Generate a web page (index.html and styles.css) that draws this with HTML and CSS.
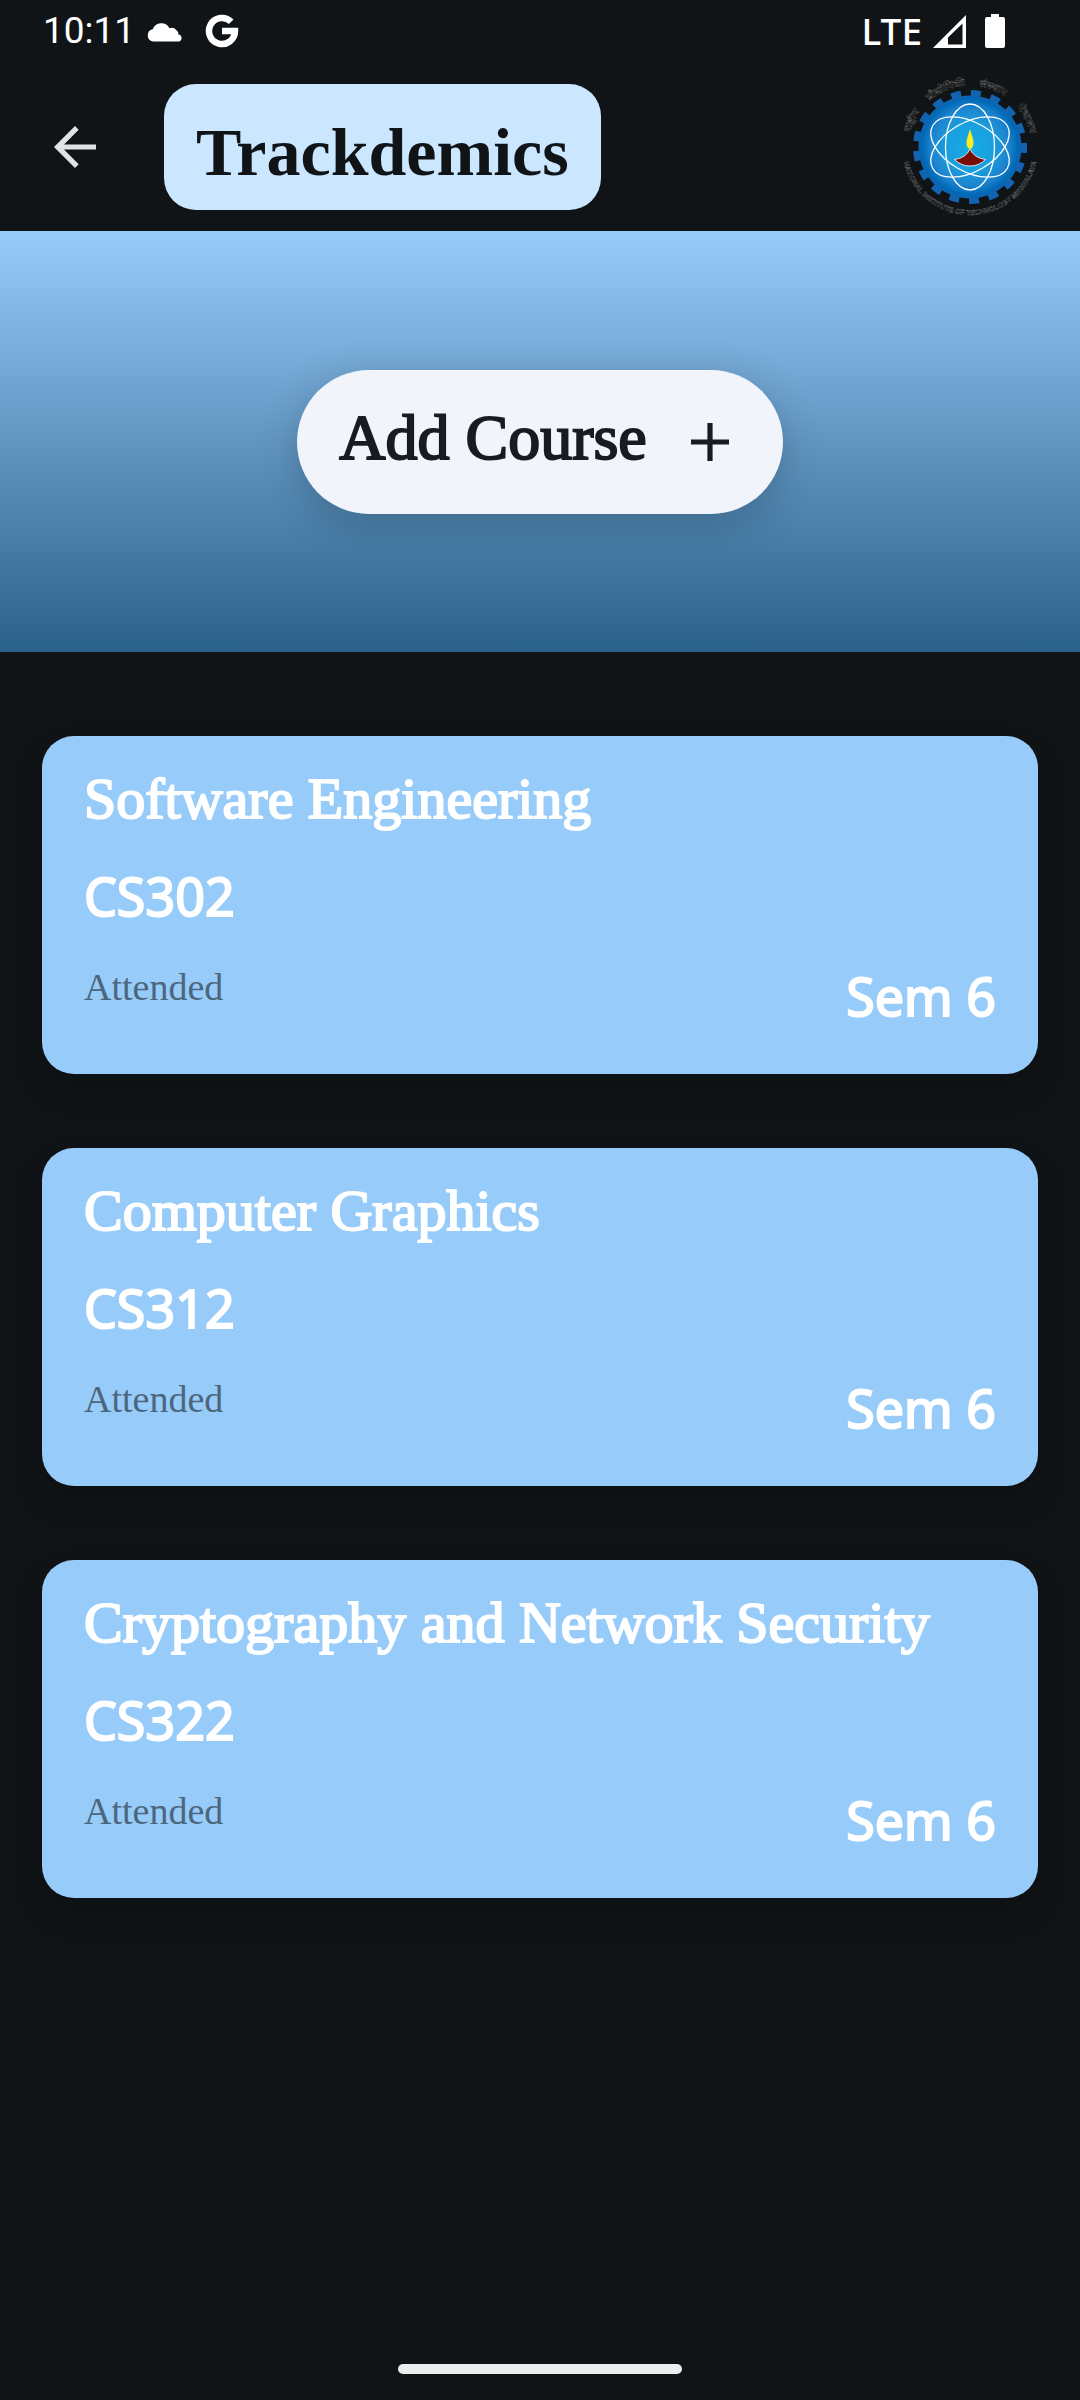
FILE: index.html
```html
<!DOCTYPE html>
<html lang="en">
<head>
<meta charset="utf-8">
<meta name="viewport" content="width=device-width, initial-scale=1">
<title>Trackdemics</title>
<link rel="stylesheet" href="styles.css">
</head>
<body>
<div class="status">
  <span class="time">10:11</span>
  <svg class="cloud" viewBox="0 0 36 21" aria-hidden="true"><path d="M6 20.500A6.200 6.200 0 0 1 5.700 8.300A9.200 9.200 0 0 1 22.500 7.200A7 7 0 0 1 31.500 13.500A3.600 3.600 0 0 1 32 20.500Z"/></svg>
  <svg class="google" viewBox="0 0 34 34" aria-hidden="true"><path d="M26.200 7.800A13 13 0 1 0 30 17H17" fill="none" stroke="#fff" stroke-width="6.500"/></svg>
  <span class="network">LTE</span>
  <svg class="signal" viewBox="0 0 33 33" aria-hidden="true"><path fill-rule="evenodd" d="M33 0V33H0ZM29.500 8.500L15 22.500V29.500H29.500Z"/></svg>
  <svg class="battery" viewBox="0 0 20 34" aria-hidden="true"><path d="M6 0H14V3H18Q20 3 20 5V32Q20 34 18 34H2Q0 34 0 32V5Q0 3 2 3H6Z"/></svg>
</div>
<header class="bar">
  <button class="back" type="button" aria-label="Back"><svg viewBox="0 0 42 42" aria-hidden="true"><path d="M42 18.400H10L24.700 3.700L21 0L0 21L21 42L24.700 38.300L10 23.600H42Z"/></svg></button>
  <h1 class="brand">Trackdemics</h1>
  <svg class="logo" viewBox="-70 -70 140 140" role="img" aria-label="Institute emblem">
    <defs>
      <radialGradient id="glow"><stop offset="0" stop-color="#16ace4"/><stop offset=".45" stop-color="#19a0de"/><stop offset=".75" stop-color="#1e84cf"/><stop offset=".93" stop-color="#0069b6"/><stop offset="1" stop-color="#1263b0"/></radialGradient>
      <path id="low" d="M-68 0A68 68 0 0 0 68 0"/>
      <path id="high" d="M-61 -9A61.700 61.700 0 0 1 61 -9"/>
    </defs>
    <circle r="53.800" fill="none" stroke="#1263b0" stroke-width="6.400" pathLength="170" stroke-dasharray="5 5" transform="rotate(-89)"/>
    <circle r="51.500" fill="url(#glow)"/>
    <g fill="none" stroke="#fff" stroke-width="1.300">
      <ellipse rx="24.500" ry="43"/>
      <ellipse rx="24.500" ry="43" transform="rotate(60)"/>
      <ellipse rx="24.500" ry="43" transform="rotate(-60)"/>
    </g>
    <path d="M0 -18C1 -14 3.500 -9 3.500 -4Q3.500 1 0 2Q-3.500 1 -3.500 -4C-3.500 -9 -1 -14 0 -18Z" fill="#f9ed20"/>
    <path d="M0 2Q4 11 15.500 12.500Q9 19 0 19Q-9 19 -15.500 12.500Q-4 11 0 2Z" fill="#780d05" stroke="#fff" stroke-width=".8"/>
    <g class="ring">
      <text class="hindi"><textPath href="#high" startOffset="10%">राष्ट्रीय</textPath></text>
      <text class="hindi"><textPath href="#high" startOffset="36%">प्रौद्योगिकी</textPath></text>
      <text class="hindi"><textPath href="#high" startOffset="63%">संस्थान</textPath></text>
      <text class="hindi"><textPath href="#high" startOffset="89%">मेघालय</textPath></text>
      <text><textPath href="#low" startOffset="50%">NATIONAL INSTITUTE OF TECHNOLOGY MEGHALAYA</textPath></text>
    </g>
  </svg>
</header>
<section class="hero">
  <button class="add" type="button"><span class="label">Add Course</span><svg viewBox="0 0 38 38" aria-hidden="true"><path d="M16.400 0H21.600V16.400H38V21.600H21.600V38H16.400V21.600H0V16.400H16.400Z"/></svg></button>
</section>
<main class="courses">
  <article class="card">
    <h2 class="name">Software Engineering</h2>
    <p class="code">CS302</p>
    <div class="foot"><span class="attended">Attended</span><span class="sem">Sem 6</span></div>
  </article>
  <article class="card">
    <h2 class="name">Computer Graphics</h2>
    <p class="code">CS312</p>
    <div class="foot"><span class="attended">Attended</span><span class="sem">Sem 6</span></div>
  </article>
  <article class="card">
    <h2 class="name">Cryptography and Network Security</h2>
    <p class="code">CS322</p>
    <div class="foot"><span class="attended">Attended</span><span class="sem">Sem 6</span></div>
  </article>
</main>
<footer class="gesture"><div class="handle"></div></footer>
</body>
</html>
```
FILE: styles.css
```css
* { box-sizing: border-box; }

body {
  margin: 0;
  min-height: 100vh;
  display: flex;
  flex-direction: column;
  background: #101417;
  color: #fff;
  font-family: "Liberation Serif", serif;
}

h1, h2, p { margin: 0; font-weight: 400; }
svg { display: block; flex: none; fill: currentColor; }

button {
  border: 0;
  padding: 0;
  font: inherit;
  color: inherit;
  background: none;
}

.status {
  display: flex;
  align-items: center;
  height: 62px;
  padding: 0 75px 0 43px;
}

.time {
  font: 37px/44px Roboto, sans-serif;
}

.cloud { width: 36px; height: 21px; margin-left: 12px; }
.google { width: 34px; height: 34px; margin-left: 22px; }

.network {
  margin-left: auto;
  font: 500 37px/44px "Noto Sans", sans-serif;
}

.signal { width: 33px; height: 33px; margin-left: 11px; }
.battery { width: 20px; height: 34px; margin-left: 19px; }

.bar {
  display: flex;
  align-items: center;
  height: 169px;
  padding: 0 40px 0 54px;
}

.back { color: #e0e3e6; }
.back svg { width: 42px; height: 42px; }

.brand {
  margin-left: 68px;
  padding: 28px 32px 18px;
  border-radius: 32px;
  background: #cbe6ff;
  color: #101417;
  font-size: 68px;
  font-weight: 700;
  line-height: 80px;
}

.logo { width: 140px; height: 140px; margin-left: auto; }

.ring {
  fill: #050505;
  stroke: #8a8a8a;
  stroke-width: .3px;
  text-anchor: middle;
  font: 700 7px "Liberation Sans", "Noto Sans", sans-serif;
}

.hindi { font-size: 10px; }

.hero {
  display: flex;
  align-items: center;
  justify-content: center;
  height: 421px;
  background: linear-gradient(#98cbfa, #2a6189);
}

.add {
  display: flex;
  align-items: center;
  gap: 44px;
  height: 144px;
  padding: 0 54px 0 42px;
  border-radius: 72px;
  background: #f1f4fa;
  color: #181c20;
  box-shadow: 0 10px 40px rgb(0 0 0 / 20%);
  font-size: 64px;
  line-height: 72px;
  -webkit-text-stroke: 2px;
}

.label { padding-bottom: 8px; }
.add svg { width: 38px; height: 38px; }

.courses {
  display: grid;
  gap: 74px;
  padding: 84px 42px 0;
}

.card {
  padding: 30px 42px 42px;
  border-radius: 32px;
  background: #97cbf9;
  box-shadow: 0 16px 32px rgb(0 0 0 / 18%);
}

.name {
  font-size: 58px;
  line-height: 66px;
  -webkit-text-stroke: 2px;
}

.code, .sem {
  font: 400 52px/72px "Noto Sans", sans-serif;
  -webkit-text-stroke: 2px;
}

.code { margin-top: 28px; }

.foot {
  display: flex;
  justify-content: space-between;
  align-items: flex-start;
  margin-top: 28px;
}

.attended {
  padding-top: 3px;
  color: #4c677d;
  font-size: 38px;
  line-height: 48px;
}

.gesture {
  display: flex;
  justify-content: center;
  margin-top: auto;
  padding: 24px 0 26px;
}

.handle {
  width: 284px;
  height: 10px;
  border-radius: 5px;
  background: #ebeeed;
}
```
